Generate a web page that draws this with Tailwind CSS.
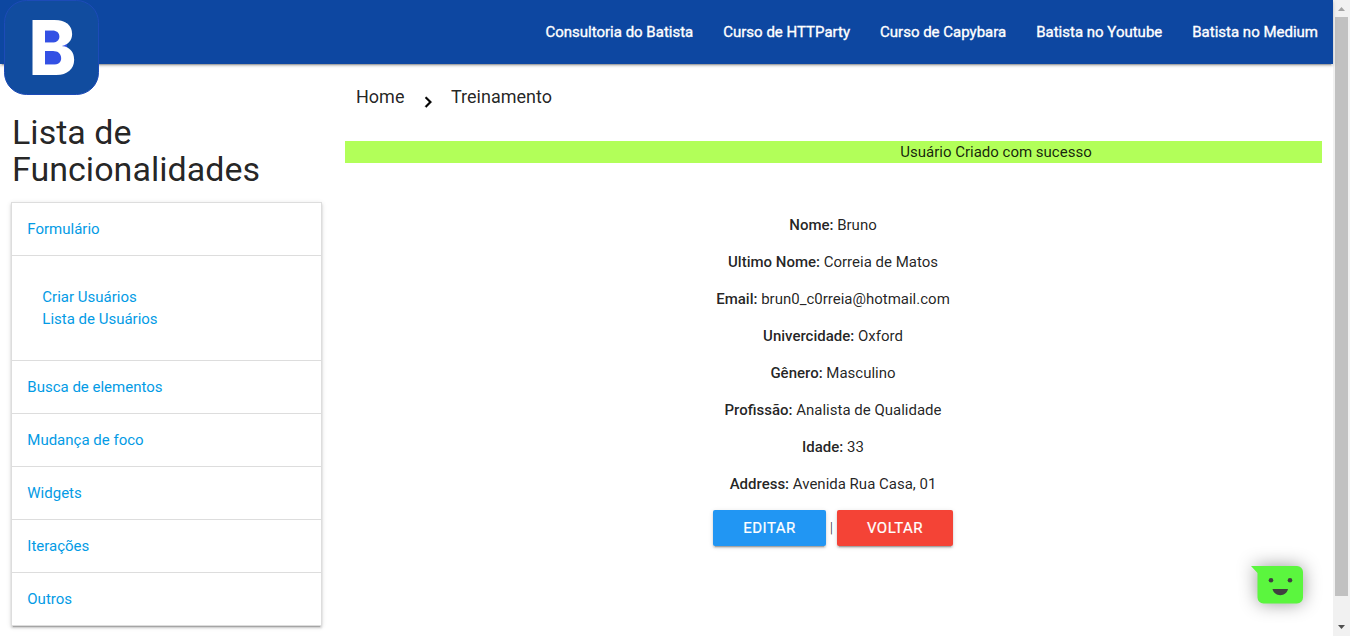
<!DOCTYPE html>
<html lang="pt-BR">
<head>
<meta charset="utf-8">
<title>Treinamento</title>
<script src="https://cdn.jsdelivr.net/npm/@tailwindcss/browser@4"></script>
</head>
<body class="flex h-[636px] overflow-hidden bg-white font-['Roboto',sans-serif] text-[15px] leading-[22px] text-black/87">
<div class="relative flex h-full w-[1333px] flex-col">
  <nav class="relative flex h-16 shrink-0 items-center justify-end bg-[#0d47a1] shadow-[0_2px_2px_0_rgba(0,0,0,0.14),0_1px_5px_0_rgba(0,0,0,0.12),0_3px_1px_-2px_rgba(0,0,0,0.2)]">
    <svg class="absolute left-1 top-0" width="95" height="96" viewBox="0 0 95 96">
      <rect x="0.5" y="0.5" width="94" height="94" rx="22" fill="#114c9f" stroke="#1d4bb8"/>
      <rect x="34" y="26" width="29" height="43" fill="#3350e4"/>
      <text transform="translate(24.400 75) scale(.955 1)" font-family="Inter" font-weight="800" font-size="75.5" fill="#fff">B</text>
    </svg>
    <ul class="flex text-white [-webkit-text-stroke:0.35px_white]">
      <li class="px-[15px]">Consultoria do Batista</li>
      <li class="px-[15px]">Curso de HTTParty</li>
      <li class="px-[15px]">Curso de Capybara</li>
      <li class="px-[15px]">Batista no Youtube</li>
      <li class="px-[15px]">Batista no Medium</li>
    </ul>
  </nav>
  <div class="flex">
    <aside class="w-[322px] pl-[11px] pt-[50px]">
      <h1 class="pl-px text-[34px] leading-[37px] tracking-[0.03px]">Lista de<br>Funcionalidades</h1>
      <ul class="mt-[14px] border border-[#ddd] text-[#039be5] shadow-[0_2px_2px_0_rgba(0,0,0,0.14),0_1px_5px_0_rgba(0,0,0,0.12),0_3px_1px_-2px_rgba(0,0,0,0.2)]">
        <li class="h-[53px] border-b border-[#ddd] px-[15.3px] py-[15px]">Formulário</li>
        <li class="h-[105px] border-b border-[#ddd] px-[30.3px] pt-[30px]">Criar Usuários<br>Lista de Usuários</li>
        <li class="h-[53px] border-b border-[#ddd] px-[15.3px] py-[15px]">Busca de elementos</li>
        <li class="h-[53px] border-b border-[#ddd] px-[15.3px] py-[15px]">Mudança de foco</li>
        <li class="h-[53px] border-b border-[#ddd] px-[15.3px] py-[15px]">Widgets</li>
        <li class="h-[53px] border-b border-[#ddd] px-[15.3px] py-[15px]">Iterações</li>
        <li class="h-[52px] px-[15.3px] py-[15px]">Outros</li>
      </ul>
    </aside>
    <main class="ml-[23px] w-[977px]">
      <div class="flex h-[77px] pl-[11px] pt-[19px] text-[18px] leading-7">
        <span class="w-12">Home</span>
        <svg class="ml-3 mr-[11px] mt-[6px]" width="24" height="24" viewBox="0 0 24 24"><path d="M10 6 8.600 7.400l4.600 4.600-4.600 4.600L10 18l6-6z" fill="#000" stroke="#000" stroke-width=".5" transform="translate(1.300 2.300) scale(.9)"/></svg>
        <span>Treinamento</span>
      </div>
      <div class="h-[22px] bg-[#b2ff59] pl-[325px] text-center">Usuário Criado com sucesso</div>
      <div class="mt-[51px] flex flex-col gap-[15px] pr-px text-center [&_b]:font-medium">
        <p><b>Nome:</b> Bruno</p>
        <p><b>Ultimo Nome:</b> Correia de Matos</p>
        <p><b>Email:</b> brun0_c0rreia@hotmail.com</p>
        <p><b>Univercidade:</b> Oxford</p>
        <p><b>Gênero:</b> Masculino</p>
        <p><b>Profissão:</b> Analista de Qualidade</p>
        <p><b>Idade:</b> 33</p>
        <p><b>Address:</b> Avenida Rua Casa, 01</p>
      </div>
      <div class="mt-[15px] flex items-center justify-center pr-px text-center leading-9">
        <a class="h-9 w-[113px] rounded-[2px] bg-[#2196f3] tracking-[0.5px] text-white [-webkit-text-stroke:0.2px_white] shadow-[0_2px_2px_0_rgba(0,0,0,0.14),0_1px_5px_0_rgba(0,0,0,0.12),0_3px_1px_-2px_rgba(0,0,0,0.2)]">EDITAR</a>
        <span class="w-[11px] font-light">|</span>
        <a class="h-9 w-[116px] rounded-[2px] bg-[#f44336] tracking-[0.5px] text-white [-webkit-text-stroke:0.2px_white] shadow-[0_2px_2px_0_rgba(0,0,0,0.14),0_1px_5px_0_rgba(0,0,0,0.12),0_3px_1px_-2px_rgba(0,0,0,0.2)]">VOLTAR</a>
      </div>
    </main>
  </div>
  <svg class="absolute left-[1230px] top-[540px] overflow-visible drop-shadow-[0_0_9px_rgba(0,0,0,0.4)]" width="100" height="90" viewBox="0 0 100 90">
    <path d="M21 26H67a6 6 0 0 1 6 6V57.500a6 6 0 0 1-6 6H33.500a6 6 0 0 1-6-6V33z" fill="#5bf63e"/>
    <circle cx="41" cy="40.300" r="2.300" fill="#404040"/><circle cx="60" cy="40.300" r="2.300" fill="#404040"/>
    <path d="M42.500 49h15.500c-1 4-4 6.200-7.700 6.200s-6.800-2.200-7.800-6.200z" fill="#404040"/>
  </svg>
</div>
<div class="flex h-full w-[17px] flex-col items-center justify-between bg-[#f1f1f1]">
  <svg width="17" height="17" viewBox="0 0 17 17"><path d="M5 11h7L8.500 7z" fill="#a3a3a3"/></svg>
  <div class="h-[579px] w-[13px] bg-[#c1c1c1]"></div>
  <svg class="mt-auto" width="17" height="17" viewBox="0 0 17 17"><path d="M5 6h7L8.500 10z" fill="#505050"/></svg>
</div>
</body>
</html>
